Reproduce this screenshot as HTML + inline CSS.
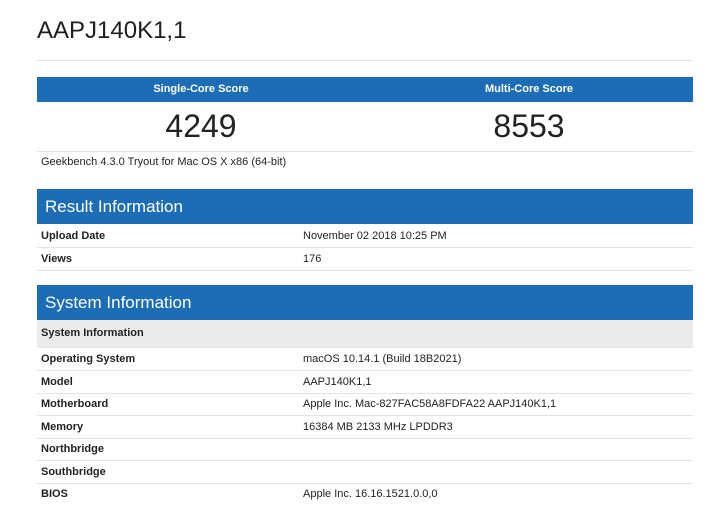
<!DOCTYPE html>
<html><head><style>
body{margin:0;background:#fff;font-family:"Liberation Sans",sans-serif;color:#222;width:723px;height:516px;overflow:hidden;position:relative}
.a{position:absolute}
h1{position:absolute;left:37px;top:17px;margin:0;font-size:24px;font-weight:normal;color:#1e1e1e}
.hr{position:absolute;left:37px;width:656px;height:1px;background:#e3e3e3}
.blue{position:absolute;left:37px;width:656px;background:#1c6db5;color:#fff}
.row{position:absolute;left:37px;width:656px;height:22px;border-bottom:1px solid #e3e3e3;font-size:11px;line-height:22px}
.row b{position:absolute;left:4px}
.row span{position:absolute;left:266px}
</style></head><body>
<h1>AAPJ140K1,1</h1>
<div class="hr" style="top:60px"></div>
<div class="blue" style="top:77px;height:25px;font-size:11px;font-weight:bold;line-height:25px">
<div class="a" style="left:0;width:328px;text-align:center">Single-Core Score</div>
<div class="a" style="left:328px;width:328px;text-align:center">Multi-Core Score</div>
</div>
<div class="a" style="left:37px;top:108px;width:328px;text-align:center;font-size:32px">4249</div>
<div class="a" style="left:365px;top:108px;width:328px;text-align:center;font-size:32px">8553</div>
<div class="hr" style="top:151px"></div>
<div class="a" style="left:41px;top:156px;font-size:11px">Geekbench 4.3.0 Tryout for Mac OS X x86 (64-bit)</div>
<div class="blue" style="top:189px;height:35px;font-size:17px;line-height:36px"><span style="margin-left:8px">Result Information</span></div>
<div class="row" style="top:225px"><b>Upload Date</b><span>November 02 2018 10:25 PM</span></div>
<div class="row" style="top:248px"><b>Views</b><span>176</span></div>
<div class="blue" style="top:285px;height:35px;font-size:17px;line-height:36px"><span style="margin-left:8px">System Information</span></div>
<div class="row" style="top:320px;height:27px;line-height:27px;background:#ebebeb"><b>System Information</b></div>
<div class="row" style="top:348px"><b>Operating System</b><span>macOS 10.14.1 (Build 18B2021)</span></div>
<div class="row" style="top:371px"><b>Model</b><span>AAPJ140K1,1</span></div>
<div class="row" style="top:393px"><b>Motherboard</b><span>Apple Inc. Mac-827FAC58A8FDFA22 AAPJ140K1,1</span></div>
<div class="row" style="top:416px"><b>Memory</b><span>16384 MB 2133 MHz LPDDR3</span></div>
<div class="row" style="top:438px"><b>Northbridge</b><span></span></div>
<div class="row" style="top:461px"><b>Southbridge</b><span></span></div>
<div class="row" style="top:483px;border:none"><b>BIOS</b><span>Apple Inc. 16.16.1521.0.0,0</span></div>
</body></html>
